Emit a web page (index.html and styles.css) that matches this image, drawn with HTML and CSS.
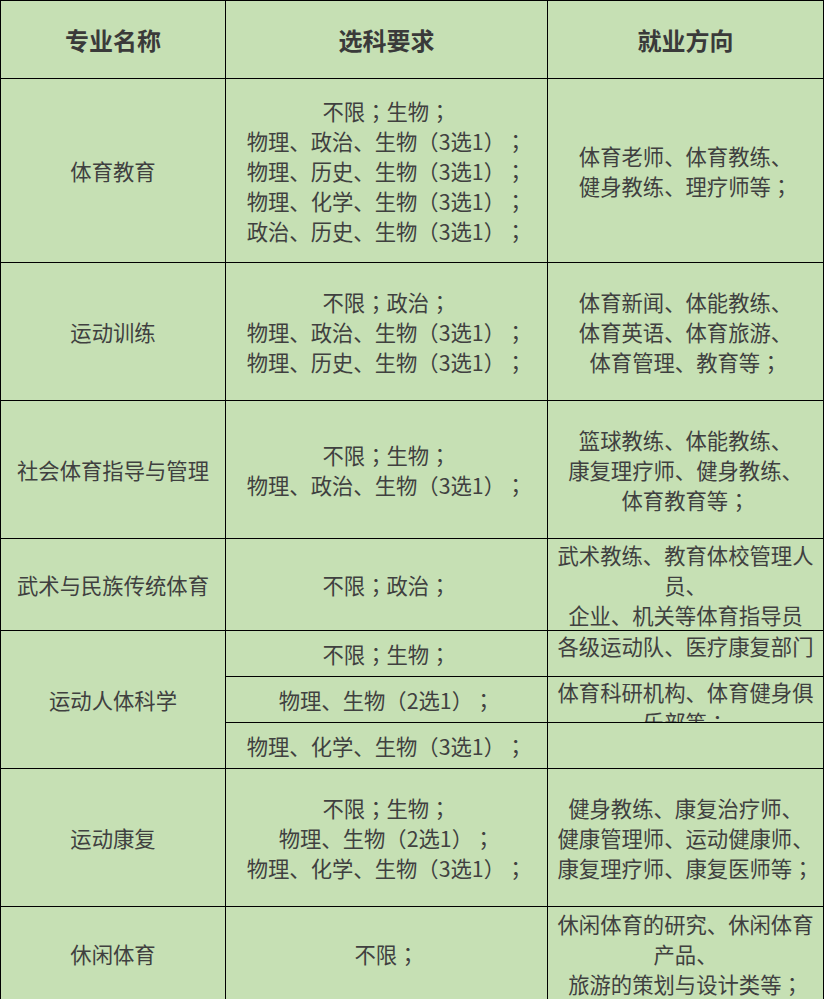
FILE: index.html
```html
<!DOCTYPE html>
<html lang="zh-CN">
<head>
<meta charset="utf-8">
<title>体育类专业选科要求</title>
<link rel="stylesheet" href="styles.css">
</head>
<body>
<div class="table">
  <div class="cell head"><div class="txt">专业名称</div></div>
  <div class="cell head"><div class="txt">选科要求</div></div>
  <div class="cell head"><div class="txt">就业方向</div></div>

  <div class="cell"><div class="txt">体育教育</div></div>
  <div class="cell"><div class="txt">不限<span class="p" lang="zh-TW">；</span>生物<span class="p" lang="zh-TW">；</span><br>物理、政治、生物<span class="p" lang="zh-TW">（</span>3选1<span class="p" lang="zh-TW">）；</span><br>物理、历史、生物<span class="p" lang="zh-TW">（</span>3选1<span class="p" lang="zh-TW">）；</span><br>物理、化学、生物<span class="p" lang="zh-TW">（</span>3选1<span class="p" lang="zh-TW">）；</span><br>政治、历史、生物<span class="p" lang="zh-TW">（</span>3选1<span class="p" lang="zh-TW">）；</span></div></div>
  <div class="cell"><div class="txt">体育老师、体育教练、<br>健身教练、理疗师等<span class="p" lang="zh-TW">；</span></div></div>

  <div class="cell"><div class="txt">运动训练</div></div>
  <div class="cell"><div class="txt">不限<span class="p" lang="zh-TW">；</span>政治<span class="p" lang="zh-TW">；</span><br>物理、政治、生物<span class="p" lang="zh-TW">（</span>3选1<span class="p" lang="zh-TW">）；</span><br>物理、历史、生物<span class="p" lang="zh-TW">（</span>3选1<span class="p" lang="zh-TW">）；</span></div></div>
  <div class="cell"><div class="txt">体育新闻、体能教练、<br>体育英语、体育旅游、<br>体育管理、教育等<span class="p" lang="zh-TW">；</span></div></div>

  <div class="cell"><div class="txt">社会体育指导与管理</div></div>
  <div class="cell"><div class="txt">不限<span class="p" lang="zh-TW">；</span>生物<span class="p" lang="zh-TW">；</span><br>物理、政治、生物<span class="p" lang="zh-TW">（</span>3选1<span class="p" lang="zh-TW">）；</span></div></div>
  <div class="cell"><div class="txt">篮球教练、体能教练、<br>康复理疗师、健身教练、<br>体育教育等<span class="p" lang="zh-TW">；</span></div></div>

  <div class="cell"><div class="txt">武术与民族传统体育</div></div>
  <div class="cell"><div class="txt">不限<span class="p" lang="zh-TW">；</span>政治<span class="p" lang="zh-TW">；</span></div></div>
  <div class="cell"><div class="txt">武术教练、教育体校管理人<br>员、<br>企业、机关等体育指导员</div></div>

  <div class="cell span3"><div class="txt">运动人体科学</div></div>
  <div class="cell"><div class="txt">不限<span class="p" lang="zh-TW">；</span>生物<span class="p" lang="zh-TW">；</span></div></div>
  <div class="cell top"><div class="txt">各级运动队、医疗康复部门</div></div>
  <div class="cell"><div class="txt">物理、生物<span class="p" lang="zh-TW">（</span>2选1<span class="p" lang="zh-TW">）；</span></div></div>
  <div class="cell top"><div class="txt">体育科研机构、体育健身俱<br>乐部等<span class="p" lang="zh-TW">；</span></div></div>
  <div class="cell"><div class="txt">物理、化学、生物<span class="p" lang="zh-TW">（</span>3选1<span class="p" lang="zh-TW">）；</span></div></div>
  <div class="cell top"></div>

  <div class="cell"><div class="txt">运动康复</div></div>
  <div class="cell"><div class="txt">不限<span class="p" lang="zh-TW">；</span>生物<span class="p" lang="zh-TW">；</span><br>物理、生物<span class="p" lang="zh-TW">（</span>2选1<span class="p" lang="zh-TW">）；</span><br>物理、化学、生物<span class="p" lang="zh-TW">（</span>3选1<span class="p" lang="zh-TW">）；</span></div></div>
  <div class="cell"><div class="txt">健身教练、康复治疗师、<br>健康管理师、运动健康师、<br>康复理疗师、康复医师等<span class="p" lang="zh-TW">；</span></div></div>

  <div class="cell"><div class="txt">休闲体育</div></div>
  <div class="cell"><div class="txt">不限<span class="p" lang="zh-TW">；</span></div></div>
  <div class="cell"><div class="txt">休闲体育的研究、休闲体育<br>产品、<br>旅游的策划与设计类等<span class="p" lang="zh-TW">；</span></div></div>
</div>
</body>
</html>
```

FILE: styles.css
```css
html, body {
  margin: 0;
  padding: 0;
  background: #c6e0b4;
}

.table {
  display: grid;
  grid-template-columns: 224px 321px 275px;
  grid-template-rows: 77px 183px 137px 137px 91px 45px 45px 45px 137px 93px;
  gap: 1px;
  padding: 1px;
  width: 822px;
  background: #000;
  font-family: "Noto Sans CJK SC", "Noto Sans", sans-serif;
  font-size: 21.33px;
  line-height: 30px;
  color: #404040;
  text-spacing-trim: space-all;
}

.cell {
  background: #c6e0b4;
  display: flex;
  align-items: center;
  justify-content: center;
  padding: 0 4px;
  overflow: hidden;
}

.txt {
  text-align: center;
  white-space: nowrap;
}

.txt .p {
  font-family: "Noto Sans CJK TC", "Noto Sans CJK SC", sans-serif;
}

.head {
  font-size: 24px;
  font-weight: bold;
  color: #3a3a3a;
}

.span3 {
  grid-row: span 3;
}

.top {
  align-items: flex-start;
}
```
